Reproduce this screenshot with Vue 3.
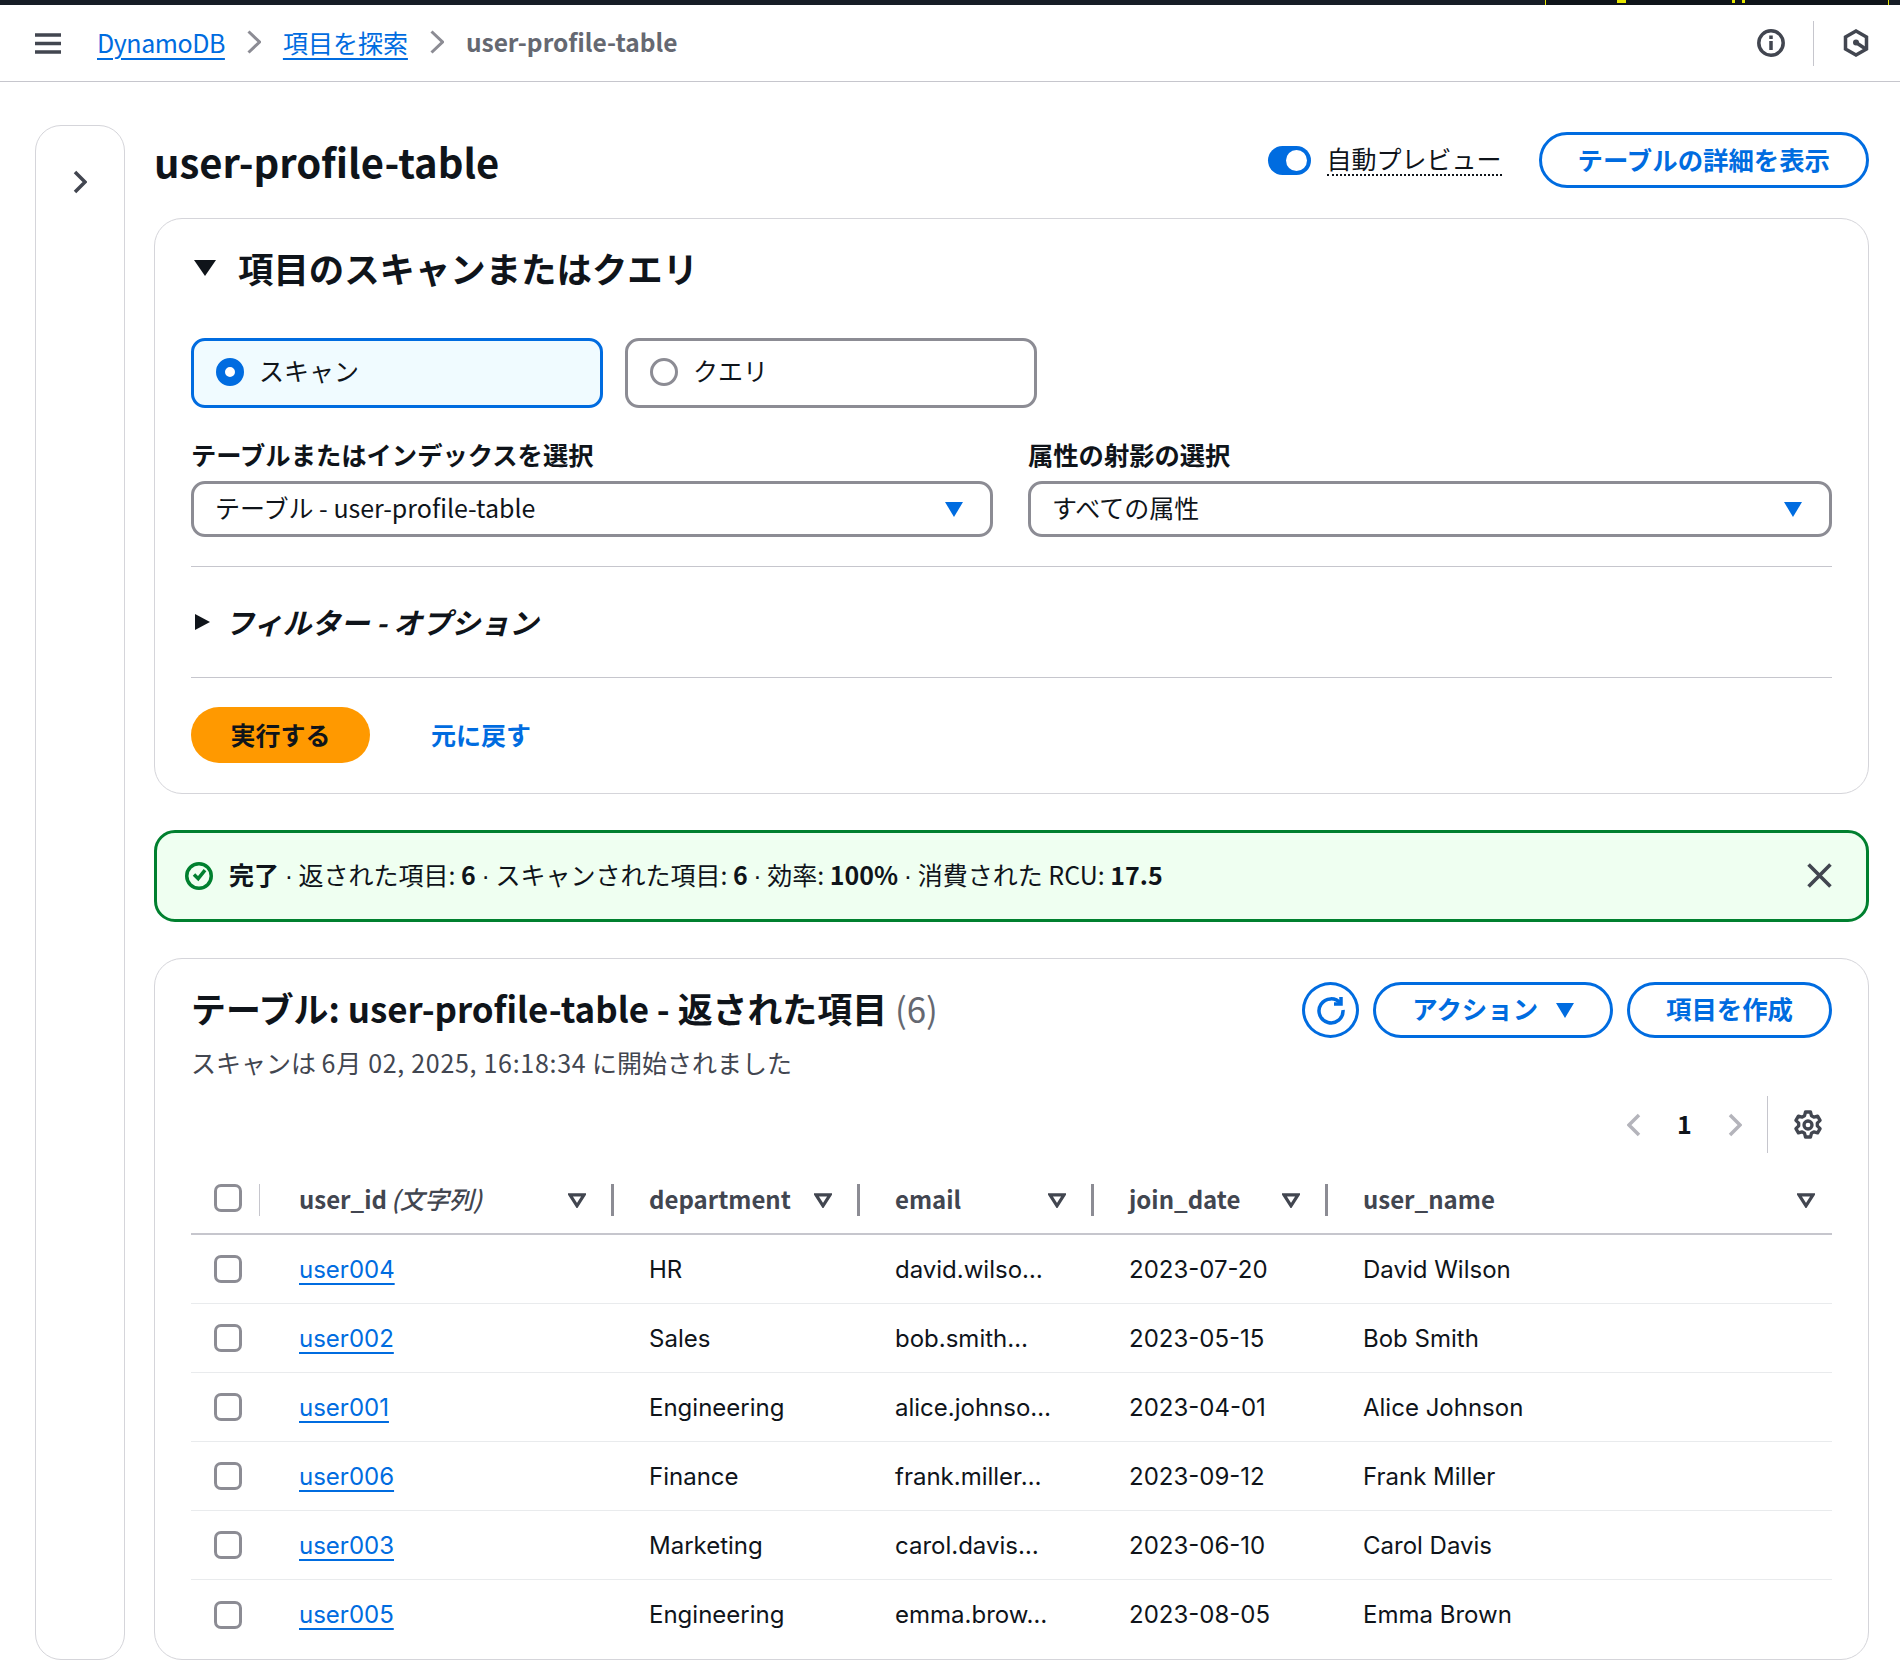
<template>
  <div class="page">
    <div class="topbar"><div class="status"><i class="mark m1"></i><i class="mark m2"></i><i class="mark m3"></i></div></div>
    <header class="header">
      <svg class="menu" viewBox="0 0 26 21"><path d="M0 2h26M0 10.5h26M0 19h26" /></svg>
      <nav class="crumbs">
        <a class="link crumb-first">DynamoDB</a>
        <svg class="crumb-sep" viewBox="0 0 14 24"><path d="M1.500 1.500L12.500 12 1.500 22.500" /></svg>
        <a class="link">項目を探索</a>
        <svg class="crumb-sep" viewBox="0 0 14 24"><path d="M1.500 1.500L12.500 12 1.500 22.500" /></svg>
        <span class="crumb-current">user-profile-table</span>
      </nav>
      <div class="header-icons">
        <svg class="hicon" viewBox="0 0 28 28">
          <circle cx="14" cy="14" r="12.200" />
          <path d="M14 12v9M14 6.500v3.500" />
        </svg>
        <span class="hsep"></span>
        <svg class="hicon hex" viewBox="0 0 28 28">
          <path d="M14 2l10.500 6v12L14 26 3.500 20V8z" />
          <circle class="hex-dot" cx="14" cy="13.500" r="3" />
          <path d="M14 13.500l9 6" />
        </svg>
      </div>
    </header>

    <div class="body">
      <aside class="side">
        <svg class="side-chevron" viewBox="0 0 14 24"><path d="M2 2l10 10L2 22" /></svg>
      </aside>

      <main class="main">
        <div class="title-row">
          <h1>user-profile-table</h1>
          <div class="title-actions">
            <span class="toggle"><span class="knob"></span></span>
            <span class="toggle-label">自動プレビュー</span>
            <button class="btn btn-details">テーブルの詳細を表示</button>
          </div>
        </div>

        <section class="panel query">
          <h2 class="query-title"><span class="tri-down"></span>項目のスキャンまたはクエリ</h2>
          <div class="radios">
            <label class="radio-card on"><span class="dot"></span><span class="tx">スキャン</span></label>
            <label class="radio-card"><span class="dot"></span><span class="tx">クエリ</span></label>
          </div>
          <div class="fields">
            <div class="field">
              <div class="field-label">テーブルまたはインデックスを選択</div>
              <div class="select"><span class="tx">テーブル - user-profile-table</span><span class="select-caret"></span></div>
            </div>
            <div class="field">
              <div class="field-label">属性の射影の選択</div>
              <div class="select"><span class="tx">すべての属性</span><span class="select-caret"></span></div>
            </div>
          </div>
          <div class="filter">
            <span class="tri-right"></span>
            <span class="filter-text">フィルター - オプション</span>
          </div>
          <div class="run-row">
            <button class="btn-run">実行する</button>
            <a class="reset">元に戻す</a>
          </div>
        </section>

        <div class="flash">
          <svg class="flash-icon" viewBox="0 0 30 30">
            <circle cx="15" cy="15" r="12.250" />
            <path d="M10 13.500l4.200 4.200 6.800-8.500" />
          </svg>
          <div class="flash-text tx">
            <b>完了</b> <i class="sep">·</i> 返された項目: <b>6</b> <i class="sep">·</i> スキャンされた項目: <b>6</b> <i class="sep">·</i> 効率: <b>100%</b> <i class="sep">·</i> 消費された RCU: <b>17.5</b>
          </div>
          <svg class="flash-close" viewBox="0 0 24 24"><path d="M1.500 1.500l21 21M22.500 1.500l-21 21" /></svg>
        </div>

        <section class="panel results">
          <div class="results-head">
            <div>
              <h2 class="results-title">テーブル: user-profile-table - 返された項目 <span class="count">(6)</span></h2>
              <div class="results-sub">スキャンは <span class="stamp">6月 02, 2025, 16:18:34</span> に開始されました</div>
            </div>
            <div class="results-actions">
              <button class="btn-icon">
                <svg viewBox="0 0 30 30">
                  <path d="M24.500 8.500A12 12 0 1 0 27 15" />
                  <path d="M25 2v7h-7" />
                </svg>
              </button>
              <button class="btn btn-small">アクション<span class="btn-caret"></span></button>
              <button class="btn btn-small">項目を作成</button>
            </div>
          </div>

          <div class="pager">
            <svg class="pager-chevron" viewBox="0 0 14 24"><path d="M12 2L2 12l10 10" /></svg>
            <span class="page-num">1</span>
            <svg class="pager-chevron" viewBox="0 0 14 24"><path d="M2 2l10 10L2 22" /></svg>
            <span class="pager-sep"></span>
            <svg class="gear" viewBox="0 0 30 30">
              <path d="M12.500 2h5l1 3.800 2.300 1.300 3.800-1 2.500 4.300-2.800 2.800v2.600l2.800 2.800-2.500 4.300-3.800-1-2.300 1.300-1 3.800h-5l-1-3.800-2.300-1.300-3.800 1-2.500-4.300 2.800-2.800v-2.600L2.900 10.400l2.500-4.300 3.800 1 2.300-1.300z" />
              <circle cx="15" cy="15" r="4" />
            </svg>
          </div>

          <div class="table">
            <div class="row head">
              <div class="cell check"><span class="checkbox"></span><span class="check-sep"></span></div>
              <div v-for="col in columns" :key="col.key" class="cell head-cell">
                <span class="head-text">{{ col.label }}<em v-if="col.note">{{ col.note }}</em></span>
                <svg class="sort" viewBox="0 0 18 15"><path d="M2 1.800h14L9 12.800z" /></svg>
              </div>
            </div>
            <div v-for="item in items" :key="item.id" class="row item">
              <div class="cell check"><span class="checkbox"></span></div>
              <div class="cell"><a class="link">{{ item.id }}</a></div>
              <div class="cell">{{ item.department }}</div>
              <div class="cell">{{ item.email }}…</div>
              <div class="cell">{{ item.joined }}</div>
              <div class="cell">{{ item.name }}</div>
            </div>
          </div>
        </section>
      </main>
    </div>
  </div>
</template>

<script setup>
const columns = [
  { key: 'id', label: 'user_id', note: '(文字列)' },
  { key: 'department', label: 'department' },
  { key: 'email', label: 'email' },
  { key: 'joined', label: 'join_date' },
  { key: 'name', label: 'user_name' },
]

// emails are cut short in the table, same as the console does
const items = [
  { id: 'user004', department: 'HR', email: 'david.wilso', joined: '2023-07-20', name: 'David Wilson' },
  { id: 'user002', department: 'Sales', email: 'bob.smith', joined: '2023-05-15', name: 'Bob Smith' },
  { id: 'user001', department: 'Engineering', email: 'alice.johnso', joined: '2023-04-01', name: 'Alice Johnson' },
  { id: 'user006', department: 'Finance', email: 'frank.miller', joined: '2023-09-12', name: 'Frank Miller' },
  { id: 'user003', department: 'Marketing', email: 'carol.davis', joined: '2023-06-10', name: 'Carol Davis' },
  { id: 'user005', department: 'Engineering', email: 'emma.brow', joined: '2023-08-05', name: 'Emma Brown' },
]
</script>

<style>
html, body {
  margin: 0;
  background: #fff;
}
</style>

<style scoped>
.page {
  width: 1900px;
  height: 1666px;
  overflow: hidden;
  font-family: "Noto Sans CJK JP", "Noto Sans", sans-serif;
  font-size: 25px;
  color: #0f141a;
  background: #fff;
}

/* top strip */
.topbar {
  height: 5px;
  background: #161d26;
  display: flex;
  justify-content: flex-end;
  padding-right: 11px;
}
.status {
  width: 342px;
  background: #0f141a;
  border-left: 1px solid #e6e600;
  border-right: 1px solid #e6e600;
  position: relative;
}
.mark {
  position: absolute;
  top: 0;
  height: 3px;
  background: #e6e600;
}
.m1 { left: 71px; width: 9px; }
.m2 { left: 186px; width: 3px; }
.m3 { left: 196px; width: 3px; }

.tx {
  padding-bottom: 4px;
}

.header {
  height: 76px;
  border-bottom: 1px solid #c6c6cd;
  display: flex;
  align-items: center;
  padding: 0 30px 0 35px;
}
.menu {
  width: 26px;
  height: 21px;
  margin-right: 36px;
  fill: none;
  stroke: #424650;
  stroke-width: 3.500;
}
.crumbs {
  display: flex;
  align-items: center;
  padding-bottom: 3px;
}
.crumb-first {
  letter-spacing: -.45px;
}
.crumb-sep {
  width: 14px;
  height: 24px;
  margin: 0 22px;
  fill: none;
  stroke: #8c8c94;
  stroke-width: 3;
}
.crumb-current {
  color: #656871;
  font-size: 24.500px;
  font-weight: 700;
}
.link {
  color: #006ce0;
  text-decoration: underline;
  text-decoration-thickness: 2px;
  text-underline-offset: 5px;
}
.header-icons {
  margin-left: auto;
  display: flex;
  align-items: center;
}
.hicon {
  width: 28px;
  height: 28px;
  fill: none;
  stroke: #424650;
  stroke-width: 3.500;
}
.hex-dot {
  fill: #424650;
  stroke: none;
}
.hsep {
  width: 1px;
  height: 45px;
  background: #c6c6cd;
  margin: 0 28px 0 28px;
}

.body {
  display: flex;
  padding: 43px 31px 0 35px;
  gap: 29px;
}
.side {
  flex: none;
  width: 90px;
  height: 1535px;
  box-sizing: border-box;
  border: 1.500px solid #d5d5da;
  border-radius: 26px;
  display: flex;
  justify-content: center;
  padding-top: 44px;
}
.side-chevron {
  width: 14px;
  height: 24px;
  fill: none;
  stroke: #424650;
  stroke-width: 3.500;
}

.main {
  flex: 1;
  min-width: 0;
}
.title-row {
  height: 93px;
  display: flex;
  align-items: flex-start;
  justify-content: space-between;
}
h1 {
  margin: 6px 0 0;
  font-size: 40px;
  line-height: 60px;
  font-weight: 700;
}
.title-actions {
  display: flex;
  align-items: center;
  margin-top: 7px;
}
.toggle {
  width: 43px;
  height: 29px;
  border-radius: 15px;
  background: #006ce0;
  display: flex;
  align-items: center;
  justify-content: flex-end;
  padding-right: 4px;
  box-sizing: border-box;
  margin-right: 16px;
}
.knob {
  width: 21px;
  height: 21px;
  border-radius: 50%;
  background: #fff;
}
.toggle-label {
  border-bottom: 2px dotted #0f141a;
  line-height: 28px;
  padding-bottom: 2px;
  margin-right: 37px;
}
.btn {
  height: 56px;
  padding: 0 36px 5px;
  box-sizing: border-box;
  border: 3.500px solid #006ce0;
  border-radius: 28px;
  background: #fff;
  color: #006ce0;
  font: inherit;
  font-size: 25.400px;
  font-weight: 700;
  display: inline-flex;
  align-items: center;
}
.btn-details {
  padding-bottom: 3px;
}

.panel {
  border: 1.500px solid #d5d5da;
  border-radius: 28px;
  box-sizing: border-box;
  padding: 0 36px;
}
.query {
  height: 576px;
}
.query-title {
  margin: 0;
  padding-top: 24px;
  height: 119px;
  box-sizing: border-box;
  font-size: 35.400px;
  line-height: 50px;
  font-weight: 700;
  display: flex;
  align-items: flex-start;
}
.tri-down {
  width: 0;
  height: 0;
  border-left: 11px solid transparent;
  border-right: 11px solid transparent;
  border-top: 16px solid #0f141a;
  margin: 17px 22px 0 3px;
}
.radios {
  display: flex;
  gap: 22.500px;
}
.radio-card {
  width: 411.500px;
  height: 70px;
  box-sizing: border-box;
  border: 3.500px solid #8c8c94;
  border-radius: 14px;
  display: flex;
  align-items: center;
  padding: 0 0 2px 22px;
  gap: 15px;
}
.radio-card.on {
  border-color: #006ce0;
  background: #f0fbff;
}
.dot {
  width: 28px;
  height: 28px;
  box-sizing: border-box;
  border: 3.500px solid #8c8c94;
  border-radius: 50%;
  background: #fff;
}
.on .dot {
  border: 9px solid #006ce0;
}
.fields {
  display: flex;
  gap: 35.500px;
  margin-top: 28px;
}
.field {
  flex: 1;
}
.field:first-child {
  flex: 0 0 801.500px;
}
.field-label {
  font-size: 25.300px;
  font-weight: 700;
  line-height: 37px;
  margin-bottom: 8px;
}
.select {
  height: 56px;
  box-sizing: border-box;
  border: 3.500px solid #8c8c94;
  border-radius: 14px;
  display: flex;
  align-items: center;
  justify-content: space-between;
  padding: 0 27px 0 21px;
}
.select-caret {
  width: 0;
  height: 0;
  border-left: 9.500px solid transparent;
  border-right: 9.500px solid transparent;
  border-top: 15px solid #006ce0;
}
.filter {
  margin-top: 29px;
  height: 112px;
  box-sizing: border-box;
  border-top: 1.500px solid #c6c6cd;
  border-bottom: 1.500px solid #c6c6cd;
  display: flex;
  align-items: center;
  padding-left: 4px;
}
.tri-right {
  width: 0;
  height: 0;
  border-top: 8px solid transparent;
  border-bottom: 8px solid transparent;
  border-left: 15px solid #0f141a;
  margin-right: 15px;
}
.filter-text {
  font-size: 29px;
  font-weight: 700;
  font-style: italic;
  padding-bottom: 3px;
}
.run-row {
  display: flex;
  align-items: center;
  margin-top: 29px;
  gap: 61px;
}
.btn-run {
  width: 179px;
  height: 56px;
  border: 0;
  border-radius: 28px;
  background: #ff9900;
  color: #0f141a;
  font: inherit;
  font-weight: 700;
  padding: 0 0 3px;
}
.reset {
  color: #006ce0;
  font-weight: 700;
  padding-bottom: 3px;
}

.flash {
  margin-top: 36px;
  height: 92px;
  box-sizing: border-box;
  border: 3.500px solid #00802f;
  border-radius: 21px;
  background: #effff1;
  display: flex;
  align-items: center;
  padding: 0 34px 0 27px;
}
.flash-icon {
  width: 30px;
  height: 30px;
  margin-right: 15px;
  fill: none;
  stroke: #00802f;
  stroke-width: 3.500;
}
.flash-text {
  flex: 1;
}
.sep {
  font-family: "Liberation Sans", sans-serif;
  font-style: normal;
}
.flash-close {
  width: 25px;
  height: 25px;
  margin-bottom: 2px;
  fill: none;
  stroke: #424650;
  stroke-width: 3.500;
}

.results {
  margin-top: 36px;
  height: 702px;
}
.results-head {
  display: flex;
  justify-content: space-between;
  align-items: flex-start;
}
.results-title {
  margin: 0;
  padding-top: 24px;
  font-size: 34.900px;
  line-height: 50px;
  font-weight: 700;
}
.count {
  color: #656871;
  font-weight: 400;
}
.results-sub {
  margin-top: 11px;
  line-height: 36px;
  color: #424650;
}
.stamp {
  letter-spacing: .7px;
}
.results-actions {
  display: flex;
  gap: 14px;
  padding-top: 23px;
}
.btn-small {
  padding: 0 36px 5px;
}
.btn-icon {
  width: 57px;
  height: 56px;
  border: 3.500px solid #006ce0;
  border-radius: 50%;
  background: #fff;
  padding: 0;
  display: flex;
  align-items: center;
  justify-content: center;
}
.btn-icon svg {
  width: 30px;
  height: 30px;
  fill: none;
  stroke: #006ce0;
  stroke-width: 3.500;
}
.btn-caret {
  width: 0;
  height: 0;
  border-left: 9.500px solid transparent;
  border-right: 9.500px solid transparent;
  border-top: 15px solid #006ce0;
  margin: 5px 0 0 18px;
}

.pager {
  display: flex;
  align-items: center;
  justify-content: flex-end;
  height: 57px;
  margin-top: 16px;
  padding-right: 9px;
}
.pager-chevron {
  width: 14px;
  height: 24px;
  fill: none;
  stroke: #b4b4bb;
  stroke-width: 3.500;
}
.page-num {
  width: 87px;
  text-align: center;
  font-weight: 700;
  padding-bottom: 4px;
}
.pager-sep {
  width: 1px;
  height: 57px;
  background: #c6c6cd;
  margin: 0 25px;
}
.gear {
  width: 30px;
  height: 30px;
  fill: none;
  stroke: #424650;
  stroke-width: 3.300;
  stroke-linejoin: round;
}

.row {
  display: grid;
  grid-template-columns: 70px 350px 246px 234px 234px 1fr;
  height: 69px;
  box-sizing: border-box;
  border-bottom: 1.500px solid #e9ebed;
}
.row:last-child {
  border-bottom: 0;
}
.row.head {
  height: 82px;
  padding-top: 10px;
  border-bottom: 2px solid #c6c6cd;
  font-size: 24px;
}
.row.item {
  font-family: Inter, "Noto Sans", sans-serif;
  font-size: 24px;
}
.cell {
  display: flex;
  align-items: center;
  padding-left: 38px;
  min-width: 0;
}
.cell.check {
  padding-left: 23px;
  position: relative;
}
.checkbox {
  width: 28px;
  height: 28px;
  box-sizing: border-box;
  border: 3.500px solid #8c8c94;
  border-radius: 7px;
}
.check-sep {
  position: absolute;
  right: 1px;
  top: 21px;
  width: 1.500px;
  height: 32px;
  background: #c6c6cd;
}
.head-cell {
  position: relative;
  justify-content: space-between;
  padding-right: 25px;
  color: #424650;
  font-weight: 700;
}
.head-cell:last-child {
  padding-right: 17px;
}
.head-cell em {
  font-size: 24.500px;
  font-weight: 500;
  margin-left: 4px;
}
.head-cell:not(:last-child)::after {
  content: "";
  position: absolute;
  right: -3px;
  top: 21px;
  width: 3px;
  height: 32px;
  background: #8c8c94;
}
.sort {
  width: 18px;
  height: 15px;
  flex: none;
  margin-top: 4px;
  fill: none;
  stroke: #424650;
  stroke-width: 3.200;
}
</style>
